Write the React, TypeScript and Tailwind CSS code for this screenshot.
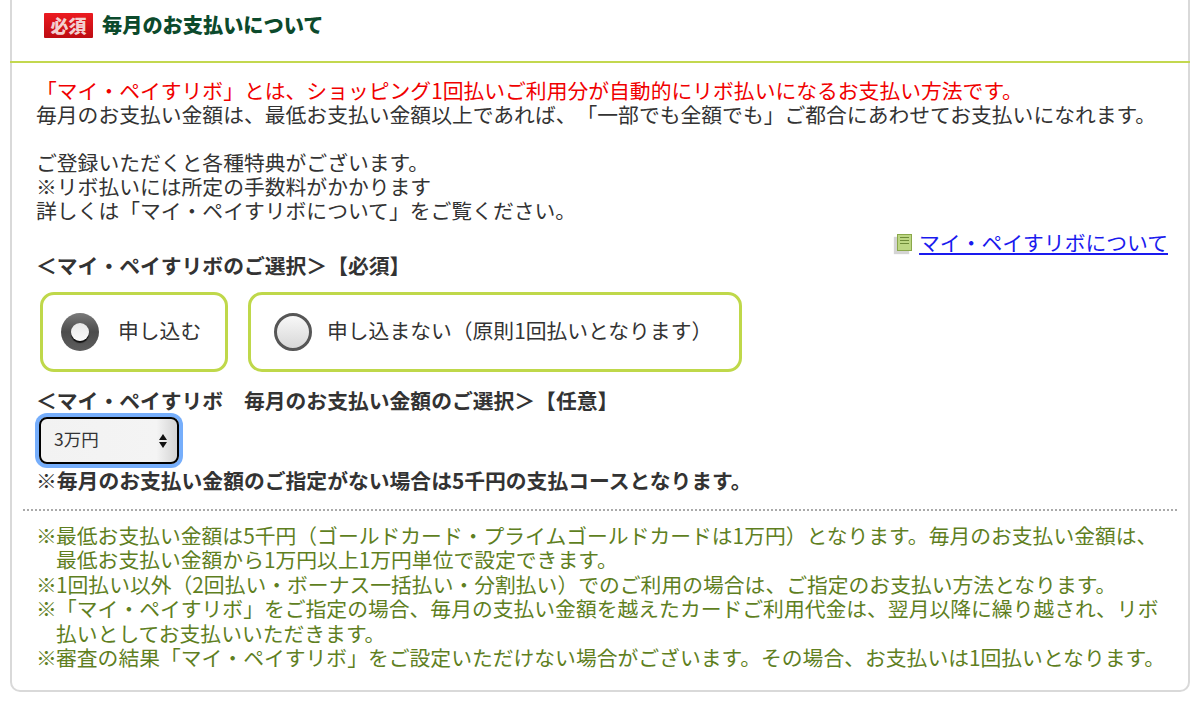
import React from "react"

const notes = [
    ["最低お支払い金額は5千円（ゴールドカード・プライムゴールドカードは1万円）となります。毎月のお支払い金額は、", "最低お支払い金額から1万円以上1万円単位で設定できます。"],
    ["1回払い以外（2回払い・ボーナス一括払い・分割払い）でのご利用の場合は、ご指定のお支払い方法となります。"],
    ["「マイ・ペイすリボ」をご指定の場合、毎月の支払い金額を越えたカードご利用代金は、翌月以降に繰り越され、リボ", "払いとしてお支払いいただきます。"],
    ["審査の結果「マイ・ペイすリボ」をご設定いただけない場合がございます。その場合、お支払いは1回払いとなります。"],
]

function Radio({ checked }: { checked?: boolean }) {
    if (checked) {
        return (
            <span className="flex size-[38px] shrink-0 items-center justify-center rounded-full bg-gradient-to-b from-[#7a7a7a] via-[#4c4c4c] to-[#5e5e5e]">
                <span className="size-[18px] rounded-full bg-gradient-to-b from-[#e8e8e8] to-[#fafafa] shadow-[0_2px_1px_#111]" />
            </span>
        )
    }
    return <span className="size-[38px] shrink-0 rounded-full border-[3px] border-[#565656] bg-gradient-to-b from-[#f8f8f8] to-[#d8d8d8]" />
}

export default function App() {
    return (
        <div className="h-[708px] w-[1200px] overflow-hidden bg-white font-['Noto_Sans_CJK_JP','Noto_Sans',sans-serif] text-[20.8px] leading-[24px] text-[#333] [text-spacing-trim:space-all]">
            <div className="mx-[10px] h-[692px] rounded-b-[10px] border-x-2 border-b-2 border-[#d9d9d9]">
                {/* header */}
                <div className="flex h-[50px] items-center pl-[32px]">
                    <span className="flex h-[25px] w-[49px] items-center justify-center rounded-[1px] bg-gradient-to-b from-[#ec1a20] to-[#bd0c12] text-[18px] leading-none font-black text-[#f3d0d0]">必須</span>
                    <h1 className="ml-[9px] text-[20.2px] leading-[26px] font-black text-[#0c4a2c]">毎月のお支払いについて</h1>
                </div>
                <div className="-mx-[2px] mt-[11px] h-[2px] bg-[#c3d84f]" />

                <div className="px-[24px] pt-[15px]">
                    <p className="text-[#f00000]">「マイ・ペイすリボ」とは、ショッピング1回払いご利用分が自動的にリボ払いになるお支払い方法です。</p>
                    <p>毎月のお支払い金額は、最低お支払い金額以上であれば、「一部でも全額でも」ご都合にあわせてお支払いになれます。</p>
                    <p className="mt-[24px]">ご登録いただくと各種特典がございます。</p>
                    <p>※リボ払いには所定の手数料がかかります</p>
                    <p>詳しくは「マイ・ペイすリボについて」をご覧ください。</p>

                    <div className="mt-[8px] flex items-center justify-end">
                        <span className="mr-[7px] flex h-[17px] w-[15px] flex-col gap-[2px] border border-[#8aa84a] bg-[#bcd683] p-[2px] shadow-[-3px_3px_1px_#d4d4d4]">
                            <span className="h-[1px] bg-[#6d8a38]" />
                            <span className="h-[1px] bg-[#6d8a38]" />
                            <span className="h-[1px] bg-[#6d8a38]" />
                        </span>
                        <a href="#" className="-mr-[4px] text-[#1a1aee] underline">マイ・ペイすリボについて</a>
                    </div>

                    <p className="-mt-[1px] font-bold">＜マイ・ペイすリボのご選択＞【必須】</p>

                    <div className="mt-[15px] flex gap-[20px] pl-[4px]">
                        <label className="flex h-[80px] w-[188px] items-center gap-[19px] rounded-[14px] border-[3px] border-[#bfd84a] pl-[18px]">
                            <Radio checked />
                            <span className="pb-[4px]">申し込む</span>
                        </label>
                        <label className="flex h-[80px] w-[494px] items-center gap-[15px] rounded-[14px] border-[3px] border-[#bfd84a] pl-[23px]">
                            <Radio />
                            <span className="pb-[4px]">申し込まない（原則1回払いとなります）</span>
                        </label>
                    </div>

                    <p className="mt-[16px] font-bold">＜マイ・ペイすリボ　毎月のお支払い金額のご選択＞【任意】</p>

                    <div className="mt-[5px] ml-[3px] flex h-[47px] w-[140px] items-center justify-between rounded-[8px] border-[2px] border-black bg-gradient-to-r from-[#f2f2f2] via-[#f4f4f4] via-85% to-[#d4d4d4] pr-[10px] pl-[13px] text-[17.5px] shadow-[0_0_0_4px_#76aefb]">
                        <span className="pb-[3px]">3万円</span>
                        <span className="flex flex-col gap-[2px]">
                            <span className="size-0 border-x-[4px] border-b-[6px] border-x-transparent border-b-[#111]" />
                            <span className="size-0 border-x-[4px] border-t-[6px] border-x-transparent border-t-[#111]" />
                        </span>
                    </div>

                    <p className="mt-[4px] font-bold">※毎月のお支払い金額のご指定がない場合は5千円の支払コースとなります。</p>
                </div>

                <div className="mx-[11px] mt-[17px] border-t-2 border-dotted border-[#aaa]" />

                <div className="pt-[12px] pl-[24px] leading-[24.4px] text-[#5f7f1f]">
                    {notes.map((lines, i) => (
                        <div className="flex" key={i}>
                            <span className="w-[20px] shrink-0">※</span>
                            <div>
                                {lines.map((line) => (
                                    <p key={line} className="whitespace-nowrap">{line}</p>
                                ))}
                            </div>
                        </div>
                    ))}
                </div>
            </div>
        </div>
    )
}
